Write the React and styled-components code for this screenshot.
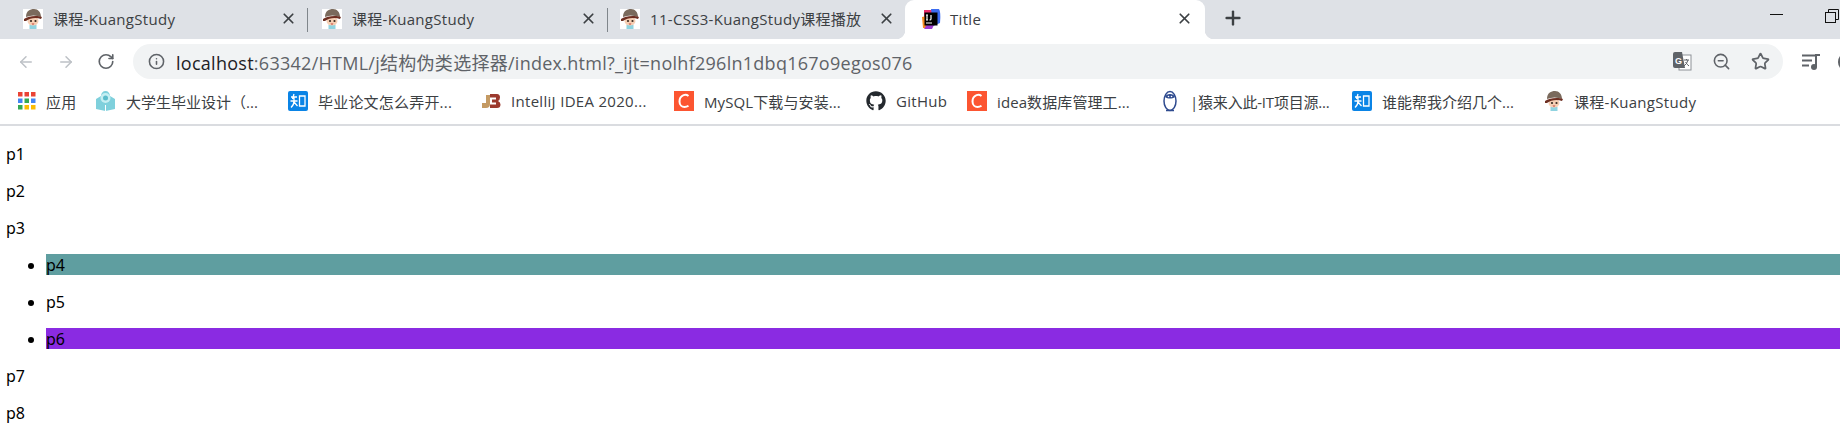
import React from 'react'
import styled, { createGlobalStyle } from 'styled-components'
import { ArrowLeft, ArrowRight, RotateCw, Info, ZoomOut, Star, X, Plus } from 'lucide-react'
import { FaGithub } from 'react-icons/fa'

const Global = createGlobalStyle`
  html, body { margin: 0; padding: 0; background: #fff; overflow: hidden; }
  body { font-family: "Open Sans", "Noto Sans CJK SC", sans-serif; color: #000; }
`

const Window = styled.div`
  width: 1840px;
  height: 442px;
  overflow: hidden;
`
const TabStrip = styled.div`
  display: flex;
  align-items: stretch;
  height: 39px;
  padding-left: 7px;
  background: #dee1e6;
`
const Tab = styled.div`
  position: relative;
  display: flex;
  align-items: center;
  flex: none;
  box-sizing: border-box;
  width: ${p => p.$width}px;
  padding: 0 ${p => (p.$active ? 12 : 10)}px 2px ${p => p.$pad || 16}px;
  font-size: 15px;
  letter-spacing: 0.3px;
  color: #3c4043;
  white-space: nowrap;
  background: ${p => (p.$active ? '#fff' : 'transparent')};
  border-radius: ${p => (p.$active ? '9px 9px 0 0' : '0')};
`
const TabTitle = styled.span`
  flex: 1;
  margin-left: ${p => p.$gap || 10}px;
`
const Separator = styled.div`
  flex: none;
  width: 1px;
  height: 24px;
  align-self: center;
  background: #80868b;
`
const Plain = styled.div`
  display: flex;
  align-items: center;
  color: #3c4043;
  padding-bottom: 3px;
  margin-left: ${p => p.$left || 0}px;
`
const WindowControls = styled.div`
  display: flex;
  align-items: flex-start;
  margin-left: 526px;
  padding-top: 9px;
  gap: 42px;
`
const Toolbar = styled.div`
  display: flex;
  align-items: center;
  height: 45px;
  box-sizing: border-box;
  padding: 5px 0 5px 17px;
  background: #fff;
`
const NavButton = styled.div`
  display: flex;
  flex: none;
  width: 18px;
  margin-right: 22px;
  justify-content: center;
  color: ${p => (p.$off ? '#bdc1c6' : '#5f6368')};
`
const Omnibox = styled.div`
  display: flex;
  align-items: center;
  flex: none;
  width: 1650px;
  height: 35px;
  box-sizing: border-box;
  margin-left: -4px;
  padding: 0 13px 0 15px;
  border-radius: 18px;
  background: #f1f3f4;
  color: #5f6368;
`
const Url = styled.div`
  flex: 1;
  margin-left: 11px;
  font-size: 18px;
  letter-spacing: 0.27px;
  white-space: nowrap;
  color: #5f6368;
  b { font-weight: 400; color: #202124; }
`
const OmniActions = styled.div`
  display: flex;
  align-items: center;
  gap: 20px;
`
const ToolbarEnd = styled.div`
  display: flex;
  align-items: center;
  flex: none;
  gap: 17px;
  margin-left: 18px;
  color: #5f6368;
`
const Avatar = styled.div`
  flex: none;
  width: 20px;
  height: 20px;
  border-radius: 50%;
  background: #5f6368;
`
const BookmarkBar = styled.div`
  display: flex;
  align-items: center;
  height: 42px;
  box-sizing: border-box;
  padding: 0 0 6px 18px;
  background: #fff;
  border-bottom: 2px solid #dadce0;
`
const Bookmark = styled.div`
  display: flex;
  align-items: center;
  flex: none;
  width: ${p => p.$width}px;
  font-size: 15px;
  letter-spacing: ${p => p.$track ?? 0.3}px;
  color: #3c4043;
  white-space: nowrap;
  span { margin-left: ${p => p.$gap || 10}px; }
`
const Page = styled.main`
  padding: 17px 0 0 6px;
  font-family: "Noto Sans", "Noto Sans CJK SC", sans-serif;
  font-size: 16px;
  line-height: 20px;
`
const Para = styled.p`
  margin: 0 0 16px;
  padding-top: 1px;
`
const List = styled.ul`
  margin: 0 0 16px;
  padding-left: 40px;
`
const Item = styled.li`
  margin-bottom: 16px;
  padding-top: 1px;
  background: ${p => p.$bg || 'transparent'};
  &:last-child { margin-bottom: 0; }
`
const Corner = styled.i`
  position: absolute;
  bottom: 0;
  width: 9px;
  height: 9px;
  ${p => (p.$side === 'left' ? 'left: -9px;' : 'right: -9px;')}
  background: radial-gradient(circle at ${p => (p.$side === 'left' ? '0 0' : '100% 0')}, #dee1e6 9px, #fff 9.5px);
`

const KuangIcon = ({ size = 20 }) => (
  <svg width={size} height={size} viewBox="0 0 20 20" style={{ flex: 'none' }}>
    <rect width="20" height="20" fill="#fff" />
    <rect x="6.500" y="16" width="7" height="4" fill="#8fd3e0" />
    <ellipse cx="10" cy="12" rx="5.500" ry="4.500" fill="#f6cfb4" />
    <path d="M3 8 C3 2 7 0 11 0 C15 0 18 3 18 8 C13 6 8 6 3 8Z" fill="#7a6a5c" />
    <path d="M1 10 C5 7 14 6 19 8 L18 10 C13 8 7 9 3 12 L1 12Z" fill="#6e2f22" />
    <circle cx="8" cy="12" r="1.100" fill="#3a2a20" />
    <circle cx="12.500" cy="12" r="1.100" fill="#3a2a20" />
    <path d="M8.500 14.500 H11.500 L10 16Z" fill="#c4453a" />
  </svg>
)
const IdeaIcon = () => (
  <svg width="20" height="20" viewBox="0 0 20 20" style={{ flex: 'none' }}>
    <path d="M3 1 H11 L13 8 L3 12Z" fill="#ef2d6b" />
    <path d="M10 0 H18 Q20 3 19 14 L12 17Z" fill="#3c6cf0" />
    <path d="M1 8 L6 7 L7 19 L2 19Z" fill="#f68a1f" />
    <path d="M7 14 L14 14 L11 20 L3 20Z" fill="#9b3bd0" />
    <rect x="3.500" y="3.500" width="13" height="13" fill="#000" />
    <rect x="5" y="13.500" width="6" height="1" fill="#fff" />
    <path d="M6 6 V11 M5 6 H7 M5 11 H7 M10 6 V10 Q10 11 8.500 11" stroke="#fff" strokeWidth="1.200" fill="none" />
  </svg>
)
const AppsIcon = () => (
  <svg width="18" height="18" viewBox="0 0 18 18" style={{ flex: 'none' }}>
    {['#ea4335', '#ea4335', '#ea4335', '#4285f4', '#34a853', '#4285f4', '#34a853', '#fbbc04', '#fbbc04'].map((c, i) => (
      <rect key={i} x={(i % 3) * 6.500} y={Math.floor(i / 3) * 6.500} width="4.500" height="4.500" fill={c} />
    ))}
  </svg>
)
const BookIcon = () => (
  <svg width="21" height="20" viewBox="0 0 21 20" style={{ flex: 'none' }}>
    <path d="M1 8 L6 5 C6 2 8 0 10.500 0 C13 0 15 2 15 5 L20 8 V18 L10.500 20 L1 18Z" fill="#7fd0dc" />
    <circle cx="10.500" cy="7" r="5" fill="#c5eef2" />
    <circle cx="10.500" cy="7" r="2.500" fill="#5bbccb" />
    <path d="M10.500 14 V20" stroke="#fff" strokeWidth="1" />
  </svg>
)
const ZhihuIcon = () => (
  <svg width="20" height="20" viewBox="0 0 20 20" style={{ flex: 'none' }}>
    <rect width="20" height="20" rx="2" fill="#0a84e6" />
    <path d="M3 6 H9 M6 3 L4.500 8 M2.500 10 H9.500 M6 6 V10 Q6 14 3 16.500 M6 11 L9.500 15 M11.500 5 H17 V15 H11.500Z" stroke="#fff" strokeWidth="1.300" fill="none" />
  </svg>
)
const JbIcon = () => (
  <svg width="20" height="20" viewBox="0 0 20 20" style={{ flex: 'none' }}>
    <path d="M1 12 H5 V4 H9 V13 Q9 17 5 17 H1Z" fill="#c49a63" />
    <path d="M9 3 H16 Q19 3 19 6.500 Q19 9 17 10 Q19.500 11 19.500 13.500 Q19.500 17 16 17 H9 V13.500 H15 V11.500 H11 V8.500 H15 V6.500 H9Z" fill="#9c3a2e" />
  </svg>
)
const CsdnIcon = () => (
  <svg width="20" height="20" viewBox="0 0 20 20" style={{ flex: 'none' }}>
    <rect width="20" height="20" fill="#fc5531" />
    <path d="M14.500 5 C13 3.800 11 3.500 9.500 4.200 C6.500 5.500 5.500 8 5.500 10.500 C5.500 14 8 16 10.500 16 C12 16 13.500 15.500 14.500 14.800" stroke="#fff" strokeWidth="2" fill="none" />
  </svg>
)
const PenguinIcon = () => (
  <svg width="20" height="22" viewBox="0 0 20 22" style={{ flex: 'none' }}>
    <ellipse cx="10" cy="11" rx="6" ry="9.500" fill="#fff" stroke="#2f4b8f" strokeWidth="1.500" />
    <path d="M5 7 C6 3 14 3 15 7 C12 9 8 9 5 7Z" fill="#2f4b8f" />
    <path d="M6 20.500 H14" stroke="#2f4b8f" strokeWidth="1.500" />
    <circle cx="8.500" cy="6.500" r="0.800" fill="#fff" />
    <circle cx="11.500" cy="6.500" r="0.800" fill="#fff" />
  </svg>
)
const TranslateIcon = () => (
  <svg width="20" height="20" viewBox="0 0 20 20">
    <rect x="7" y="3" width="12" height="15" fill="#fff" stroke="#8d9196" />
    <path d="M1 2 Q1 0 3 0 H10 L13 16 H3 Q1 16 1 14Z" fill="#5f6368" />
    <text x="3" y="12" fontSize="9" fontWeight="700" fontFamily="Liberation Sans, sans-serif" fill="#fff">G</text>
    <path d="M12 8 H17 M14.500 7 V8 M16 8 Q15 12 12 14 M13.500 10 Q15 12.500 17 14" stroke="#5f6368" fill="none" />
  </svg>
)
const MediaIcon = () => (
  <svg width="20" height="20" viewBox="0 0 20 20">
    <path d="M1 3.500 H14 M1 8.500 H11 M1 13.500 H8" stroke="#5f6368" strokeWidth="2" />
    <path d="M15 15 V3 H19" stroke="#5f6368" strokeWidth="2" fill="none" />
    <circle cx="13" cy="15" r="3" fill="#5f6368" />
  </svg>
)
const MinimizeIcon = () => (
  <svg width="13" height="13" viewBox="0 0 13 13"><path d="M0 5.500 H13" stroke="#111" /></svg>
)
const RestoreIcon = () => (
  <svg width="14" height="14" viewBox="0 0 14 14" fill="none" stroke="#111">
    <rect x="0.500" y="3.500" width="10" height="10" />
    <path d="M3.500 3.500 V0.500 H13.500 V10.500 H10.500" />
  </svg>
)

const bookmarks = [
  { icon: <AppsIcon />, label: '应用', width: 77, gap: 10 },
  { icon: <BookIcon />, label: '大学生毕业设计（...', width: 193, track: 0 },
  { icon: <ZhihuIcon />, label: '毕业论文怎么弄开...', width: 193, track: 0.2 },
  { icon: <JbIcon />, label: 'IntelliJ IDEA 2020...', width: 193 },
  { icon: <CsdnIcon />, label: 'MySQL下载与安装...', width: 192, track: 0.1 },
  { icon: <FaGithub size={20} color="#24292e" style={{ flex: 'none' }} />, label: 'GitHub', width: 101 },
  { icon: <CsdnIcon />, label: 'idea数据库管理工...', width: 193, track: 0.1 },
  { icon: <PenguinIcon />, label: '|猿来入此-IT项目源...', width: 192, track: -0.2 },
  { icon: <ZhihuIcon />, label: '谁能帮我介绍几个...', width: 192, track: 0 },
  { icon: <KuangIcon />, label: '课程-KuangStudy', width: 200 },
]

export default function App() {
  return (
    <Window>
      <Global />
      <TabStrip>
        <Tab $width={300}>
          <KuangIcon />
          <TabTitle>课程-KuangStudy</TabTitle>
          <X size={17} strokeWidth={2.4} />
        </Tab>
        <Separator />
        <Tab $width={299} $pad={14}>
          <KuangIcon />
          <TabTitle>课程-KuangStudy</TabTitle>
          <X size={17} strokeWidth={2.4} />
        </Tab>
        <Separator />
        <Tab $width={297} $pad={12}>
          <KuangIcon />
          <TabTitle>11-CSS3-KuangStudy课程播放</TabTitle>
          <X size={17} strokeWidth={2.4} />
        </Tab>
        <Tab $width={300} $active>
          <Corner $side="left" />
          <IdeaIcon />
          <TabTitle $gap={9}>Title</TabTitle>
          <X size={17} strokeWidth={2.4} />
          <Corner $side="right" />
        </Tab>
        <Plain $left={17}>
          <Plus size={22} strokeWidth={2.6} />
        </Plain>
        <WindowControls>
          <MinimizeIcon />
          <RestoreIcon />
        </WindowControls>
      </TabStrip>
      <Toolbar>
        <NavButton $off><ArrowLeft size={20} /></NavButton>
        <NavButton $off><ArrowRight size={20} /></NavButton>
        <NavButton><RotateCw size={19} strokeWidth={2.2} /></NavButton>
        <Omnibox>
          <Info size={17} strokeWidth={2.2} />
          <Url><b>localhost</b>:63342/HTML/j结构伪类选择器/index.html?_ijt=nolhf296ln1dbq167o9egos076</Url>
          <OmniActions>
            <TranslateIcon />
            <ZoomOut size={19} />
            <Star size={19} strokeWidth={2.2} />
          </OmniActions>
        </Omnibox>
        <ToolbarEnd>
          <MediaIcon />
          <Avatar />
        </ToolbarEnd>
      </Toolbar>
      <BookmarkBar>
        {bookmarks.map(b => (
          <Bookmark key={b.label} $width={b.width} $gap={b.gap} $track={b.track}>
            {b.icon}
            <span>{b.label}</span>
          </Bookmark>
        ))}
      </BookmarkBar>
      <Page>
        <Para>p1</Para>
        <Para>p2</Para>
        <Para>p3</Para>
        <List>
          <Item $bg="#5f9ea0">p4</Item>
          <Item>p5</Item>
          <Item $bg="#8a2be2">p6</Item>
        </List>
        <Para>p7</Para>
        <Para>p8</Para>
      </Page>
    </Window>
  )
}
